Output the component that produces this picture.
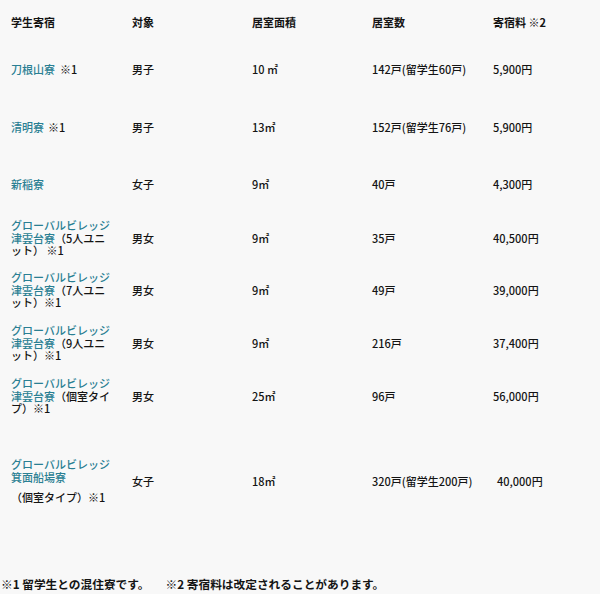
import React from "react";

const LINK = "text-[#2a7f93]";
const COLS = "grid grid-cols-[121px_120px_120px_121px_118px] items-center";

type Row = {
  name: React.ReactNode;
  target: string;
  area: string;
  rooms: string;
  fee: string;
  mb: string;
};

const rows: Row[] = [
  {
    name: (
      <span>
        <span className={LINK}>刀根山寮</span>
        <span className="ml-[5px]">※1</span>
      </span>
    ),
    target: "男子",
    area: "10 ㎡",
    rooms: "142戸(留学生60戸)",
    fee: "5,900円",
    mb: "mb-[45.5px]",
  },
  {
    name: (
      <span>
        <span className={LINK}>清明寮</span>
        <span className="ml-[4px]">※1</span>
      </span>
    ),
    target: "男子",
    area: "13㎡",
    rooms: "152戸(留学生76戸)",
    fee: "5,900円",
    mb: "mb-[44.5px]",
  },
  {
    name: <span className={LINK}>新稲寮</span>,
    target: "女子",
    area: "9㎡",
    rooms: "40戸",
    fee: "4,300円",
    mb: "mb-[28.5px]",
  },
  {
    name: (
      <span>
        <span className={LINK}>グローバルビレッジ津雲台寮</span>（5人ユニット） ※1
      </span>
    ),
    target: "男女",
    area: "9㎡",
    rooms: "35戸",
    fee: "40,500円",
    mb: "mb-[14.5px]",
  },
  {
    name: (
      <span>
        <span className={LINK}>グローバルビレッジ津雲台寮</span>（7人ユニット）※1
      </span>
    ),
    target: "男女",
    area: "9㎡",
    rooms: "49戸",
    fee: "39,000円",
    mb: "mb-[15.5px]",
  },
  {
    name: (
      <span>
        <span className={LINK}>グローバルビレッジ津雲台寮</span>（9人ユニット）※1
      </span>
    ),
    target: "男女",
    area: "9㎡",
    rooms: "216戸",
    fee: "37,400円",
    mb: "mb-[15.5px]",
  },
  {
    name: (
      <span>
        <span className={LINK}>グローバルビレッジ津雲台寮</span>（個室タイプ）※1
      </span>
    ),
    target: "男女",
    area: "25㎡",
    rooms: "96戸",
    fee: "56,000円",
    mb: "mb-[43.5px]",
  },
];

export default function App() {
  return (
    <div
      className="w-[600px] h-[594px] bg-[#f8f8f8] text-[#141414] overflow-hidden"
      style={{ fontFamily: '"Noto Sans CJK JP", "Noto Sans", sans-serif' }}
    >
      <div className="pt-[16px] text-[11px] leading-[12.5px] font-medium">
        <div className={`${COLS} mb-[34.5px] font-bold`}>
          <div className="pl-[11px]">学生寄宿</div>
          <div className="pl-[11px]">対象</div>
          <div className="pl-[11px]">居室面積</div>
          <div className="pl-[11px]">居室数</div>
          <div className="pl-[11px]">寄宿料 ※2</div>
        </div>
        {rows.map((r, i) => (
          <div key={i} className={`${COLS} ${r.mb}`}>
            <div className="pl-[11px] w-[115px]">{r.name}</div>
            <div className="pl-[11px]">{r.target}</div>
            <div className="pl-[11px]">{r.area}</div>
            <div className="pl-[11px]">{r.rooms}</div>
            <div className="pl-[11px]">{r.fee}</div>
          </div>
        ))}
        <div className={COLS}>
          <div className="pl-[11px] w-[115px]">
            <div className={LINK}>グローバルビレッジ箕面船場寮</div>
            <div className="mt-[8px]">（個室タイプ）※1</div>
          </div>
          <div className="pl-[11px]">女子</div>
          <div className="pl-[11px]">18㎡</div>
          <div className="pl-[11px]">320戸(留学生200戸)</div>
          <div className="pl-[15px]">40,000円</div>
        </div>
      </div>
      <div className="mt-[72px] pl-[1px] text-[11.7px] leading-[16px] font-bold whitespace-nowrap">
        <span>※1 留学生との混住寮です。</span>
        <span className="ml-[16px]">※2 寄宿料は改定されることがあります。</span>
      </div>
    </div>
  );
}
